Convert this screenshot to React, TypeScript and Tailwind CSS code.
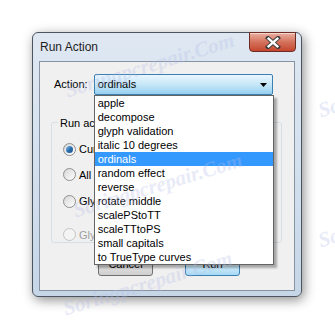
import { useState } from 'react'

const actions = [
  'apple',
  'decompose',
  'glyph validation',
  'italic 10 degrees',
  'ordinals',
  'random effect',
  'reverse',
  'rotate middle',
  'scalePStoTT',
  'scaleTTtoPS',
  'small capitals',
  'to TrueType curves',
]

function Radio({ checked, disabled }: { checked?: boolean; disabled?: boolean }) {
  return (
    <span
      className={`flex h-[13px] w-[13px] items-center justify-center rounded-full border ${
        disabled
          ? 'border-[#c4c4c4] bg-[#f4f4f4]'
          : 'border-[#8e8f8f] bg-gradient-to-br from-[#d6d6d6] to-[#ffffff]'
      }`}
    >
      {checked && (
        <span className="h-[7px] w-[7px] rounded-full bg-gradient-to-br from-[#8ac2ee] via-[#2a6fae] to-[#1d4f8a]" />
      )}
    </span>
  )
}

// faint watermark stamped over the screenshot
function Watermark({ className }: { className: string }) {
  return (
    <span
      className={`pointer-events-none absolute z-20 -rotate-[17deg] whitespace-nowrap text-[21px] font-bold italic text-[#b4bde6] opacity-30 ${className}`}
      style={{ fontFamily: '"Liberation Serif", serif' }}
    >
      Soringpcrepair.Com
    </span>
  )
}

export default function App() {
  const [selected] = useState('ordinals')

  return (
    <div
      className="relative h-[331px] w-[335px] overflow-hidden bg-white pl-[32px] pt-[32px] text-[11px] text-black"
      style={{ fontFamily: '"Liberation Sans", Arial, sans-serif' }}
    >
      {/* window */}
      <div className="relative flex h-[265px] w-[270px] flex-col rounded-[6px] border border-[#4a5560] bg-gradient-to-b from-[#dfe8f2] via-[#d3e0ee] to-[#c6d6e7] shadow-[2px_3px_12px_rgba(0,0,0,0.45)]">
        {/* title bar */}
        <div className="flex h-[28px] items-start justify-between pl-[7px] pr-[5px]">
          <span className="mt-[5px] text-[12px] text-[#1e1e1e]">Run Action</span>
          <div className="-mt-px flex h-[20px] w-[47px] items-center justify-center rounded-b-[4px] border border-[#6d2b21] bg-gradient-to-b from-[#eab0a2] via-[#d4725c] to-[#c4452d] shadow-[inset_0_1px_0_rgba(255,255,255,0.5)]">
            <svg width="16" height="13" viewBox="0 0 16 13">
              <path d="M3 2 L13 11 M13 2 L3 11" stroke="#3a3a3a" strokeWidth="4.2" strokeLinecap="square" />
              <path d="M3.6 2.6 L12.4 10.4 M12.4 2.6 L3.6 10.4" stroke="#ffffff" strokeWidth="2.4" strokeLinecap="square" />
            </svg>
          </div>
        </div>

        {/* client area */}
        <div className="relative mx-[6px] mb-[5px] flex-1 border border-[#8593a3] bg-[#f0f0f0]">
          <div className="flex items-center pl-[14px] pt-[12px]">
            <span>Action:</span>
            <div className="relative ml-[6px]">
              <div className="flex h-[21px] w-[179px] items-center justify-between rounded-[2px] border border-[#3c7fb1] bg-gradient-to-b from-[#eaf6fd] via-[#c6e7f8] to-[#97d0ef] pl-[3px] pr-[5px]">
                <span>{selected}</span>
                <svg width="7" height="4" viewBox="0 0 7 4">
                  <path d="M0 0 H7 L3.5 4 Z" fill="#000" />
                </svg>
              </div>
              {/* open list */}
              <div className="absolute left-0 top-[21px] z-10 w-[180px] border border-[#646464] bg-white shadow-[3px_3px_2px_rgba(0,0,0,0.3)]">
                {actions.map((a) => (
                  <div
                    key={a}
                    className={`flex h-[14px] items-center pl-[3px] ${
                      a === selected ? 'bg-[#3399ff] text-white' : ''
                    }`}
                  >
                    {a}
                  </div>
                ))}
              </div>
            </div>
          </div>

          {/* group box */}
          <div className="relative ml-[11px] mt-[27px] h-[121px] w-[231px] rounded-[3px] border border-[#d5dfe5]">
            <span className="absolute -top-[8px] left-[6px] bg-[#f0f0f0] px-[2px]">Run action on</span>
            <div className="flex flex-col pl-[11px] pt-[18px]">
              <div className="flex items-center gap-[3px]">
                <Radio checked />
                <span>Current glyph</span>
              </div>
              <div className="mt-[9px] flex items-center gap-[3px]">
                <Radio />
                <span>All glyphs</span>
              </div>
              <div className="mt-[10px] flex items-center gap-[3px]">
                <Radio />
                <span>Glyphs in range</span>
              </div>
              <div className="mt-[17px] flex items-center gap-[3px] text-[#a0a0a0]">
                <Radio disabled />
                <span>Glyphs selected</span>
              </div>
            </div>
          </div>

          {/* buttons */}
          <div className="ml-[58px] mt-[10px] flex gap-[32px]">
            <button className="h-[23px] w-[55px] rounded-[3px] border border-[#707070] bg-gradient-to-b from-[#f2f2f2] via-[#e3e3e3] to-[#cfcfcf]">
              Cancel
            </button>
            <button className="h-[23px] w-[55px] rounded-[3px] border border-[#3c7fb1] bg-gradient-to-b from-[#eaf6fd] via-[#d9f0fc] to-[#a7d9f5]">
              Run
            </button>
          </div>
        </div>
      </div>

      <Watermark className="left-[62px] top-[50px]" />
      <Watermark className="left-[70px] top-[170px]" />
      <Watermark className="left-[60px] top-[268px]" />
      <Watermark className="left-[315px] top-[70px]" />
      <Watermark className="left-[315px] top-[200px]" />
    </div>
  )
}
